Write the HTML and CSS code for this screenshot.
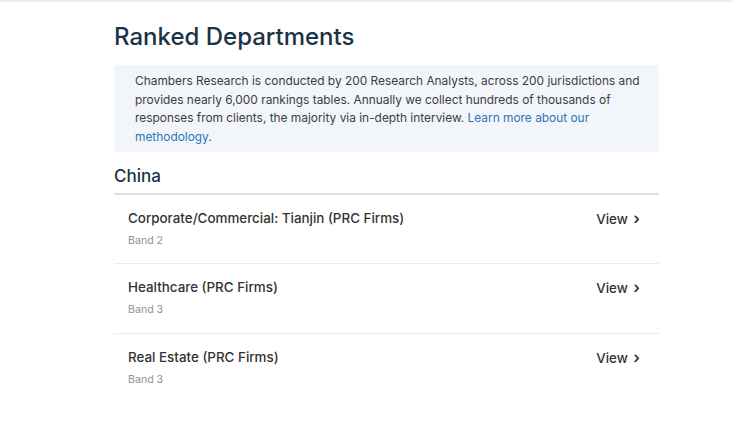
FILE: index.html
```html
<!DOCTYPE html>
<html lang="en">

<head>
  <meta charset="UTF-8">
  <meta name="viewport" content="width=device-width, initial-scale=1.0">
  <title>Ranked Departments</title>
  <link rel="stylesheet" href="styles.css">
</head>

<body>
  <div class="topline"></div>
  <section class="ranked">
    <h1 class="title">Ranked Departments</h1>
    <div class="info">
      Chambers Research is conducted by 200 Research Analysts, across 200 jurisdictions and
      provides nearly 6,000 rankings tables. Annually we collect hundreds of thousands of
      responses from clients, the majority via in-depth interview. <a href="#">Learn more about our
        methodology</a>.
    </div>

    <h2 class="country">China</h2>
    <ul class="departments">
      <li class="dept">
        <div>
          <div class="dept-name">Corporate/Commercial: Tianjin (PRC Firms)</div>
          <div class="dept-band">Band 2</div>
        </div>
        <a class="view" href="#">View <span class="chevron">&#8250;</span></a>
      </li>
      <li class="dept">
        <div>
          <div class="dept-name">Healthcare (PRC Firms)</div>
          <div class="dept-band">Band 3</div>
        </div>
        <a class="view" href="#">View <span class="chevron">&#8250;</span></a>
      </li>
      <li class="dept">
        <div>
          <div class="dept-name">Real Estate (PRC Firms)</div>
          <div class="dept-band">Band 3</div>
        </div>
        <a class="view" href="#">View <span class="chevron">&#8250;</span></a>
      </li>
    </ul>
  </section>
</body>

</html>
```

FILE: styles.css
```css
* {
  box-sizing: border-box;
}

body {
  margin: 0;
  background: #fff;
  font-family: 'Inter', 'Noto Sans', sans-serif;
  color: #333;
}

.topline {
  height: 2px;
  background: #f0f0f0;
}

.ranked {
  width: 545px;
  margin-left: 114px;
}

.title {
  margin: 19px 0 12px;
  font-size: 24px;
  font-weight: 500;
  color: #1b3346;
  line-height: 32px;
}

.info {
  background: #f2f6fb;
  padding: 7px 14px 5px 21px;
  font-size: 11.9px;
  line-height: 18.7px;
  color: #3d3d3d;
}

.info a {
  color: #2f74b5;
  text-decoration: none;
}

.country {
  margin: 12px 0 0;
  font-size: 17px;
  font-weight: 500;
  color: #1b3346;
  line-height: 24px;
  padding-bottom: 5px;
  border-bottom: 2px solid #dedede;
}

.departments {
  list-style: none;
  margin: 0;
  padding: 0;
}

.dept {
  display: flex;
  justify-content: space-between;
  align-items: flex-start;
  padding: 14px 19px 12px 14px;
  border-bottom: 1px solid #ebebeb;
  height: 69.5px;
}

.dept:last-child {
  border-bottom: none;
}

.dept-name {
  font-size: 13.4px;
  font-weight: 500;
  color: #333;
  line-height: 19px;
}

.dept-band {
  margin-top: 6px;
  font-size: 10.6px;
  color: #929292;
  line-height: 14px;
}

.view {
  font-size: 13.4px;
  font-weight: 500;
  color: #333;
  text-decoration: none;
  line-height: 19px;
}

.chevron {
  font-size: 16px;
  font-weight: 600;
  margin-left: 2px;
}
```
